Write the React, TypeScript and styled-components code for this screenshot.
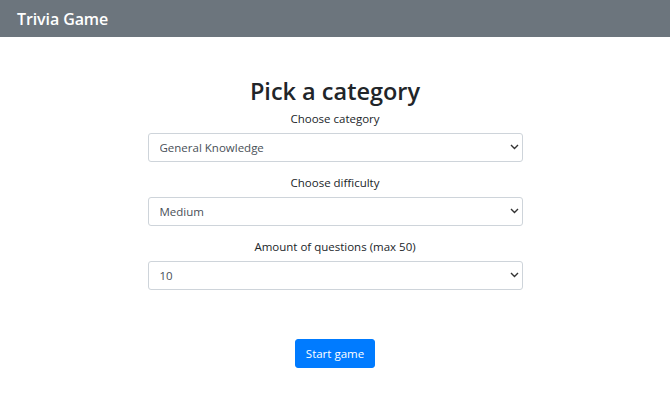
import React, { useState } from "react";
import styled, { createGlobalStyle } from "styled-components";

const GlobalStyle = createGlobalStyle`
  body {
    margin: 0;
    background: #fff;
    font-family: "Open Sans", "Noto Sans", sans-serif;
    color: #212529;
  }
`;

const NavBar = styled.nav`
  height: 37px;
  background: #6c757d;
  display: flex;
  align-items: center;
  padding: 0 17px;
`;

const Brand = styled.span`
  color: #fff;
  font-size: 16px;
  font-weight: 600;
  letter-spacing: -0.1px;
`;

const Main = styled.main`
  display: flex;
  flex-direction: column;
  align-items: center;
  padding-top: 39px;
`;

const Form = styled.form`
  width: 375px;
  display: flex;
  flex-direction: column;
  align-items: stretch;
`;

const Title = styled.h2`
  font-size: 23.5px;
  font-weight: 600;
  margin: 0 0 5px;
  text-align: center;
  line-height: 30px;
`;

const Label = styled.label`
  font-size: 11.5px;
  text-align: center;
  line-height: 16px;
  margin-bottom: 6px;
`;

const SelectWrap = styled.div`
  position: relative;
  margin-bottom: 13px;
`;

const Select = styled.select`
  width: 100%;
  height: 29px;
  appearance: none;
  border: 1px solid #ced4da;
  border-radius: 3px;
  background: #fff;
  color: #495057;
  font-family: inherit;
  font-size: 11.5px;
  padding: 0 11px;
  outline: none;
`;

const Chevron = styled.svg`
  position: absolute;
  right: 4px;
  top: 11px;
  pointer-events: none;
`;

const Button = styled.button`
  align-self: center;
  margin-top: 36px;
  height: 29px;
  padding: 0 10px;
  background: #007bff;
  border: 1px solid #007bff;
  border-radius: 3px;
  color: #fff;
  font-family: inherit;
  font-size: 11.5px;
`;

type Field = {
  label: string;
  options: string[];
};

const fields: Field[] = [
  {
    label: "Choose category",
    options: ["General Knowledge", "Science & Nature", "History", "Sports"],
  },
  { label: "Choose difficulty", options: ["Medium", "Easy", "Hard"] },
  { label: "Amount of questions (max 50)", options: ["10", "20", "30", "40", "50"] },
];

const DropDown = ({ field }: { field: Field }) => {
  const [value, setValue] = useState(field.options[0]);
  return (
    <>
      <Label>{field.label}</Label>
      <SelectWrap>
        <Select value={value} onChange={(e) => setValue(e.target.value)}>
          {field.options.map((o) => (
            <option key={o}>{o}</option>
          ))}
        </Select>
        <Chevron width="9" height="6" viewBox="0 0 9 6">
          <path d="M1 1l3.5 3.5L8 1" fill="none" stroke="#333" strokeWidth="1.4" />
        </Chevron>
      </SelectWrap>
    </>
  );
};

export default function App() {
  return (
    <>
      <GlobalStyle />
      <NavBar>
        <Brand>Trivia Game</Brand>
      </NavBar>
      <Main>
        <Form onSubmit={(e) => e.preventDefault()}>
          <Title>Pick a category</Title>
          {fields.map((f) => (
            <DropDown key={f.label} field={f} />
          ))}
          <Button type="submit">Start game</Button>
        </Form>
      </Main>
    </>
  );
}
